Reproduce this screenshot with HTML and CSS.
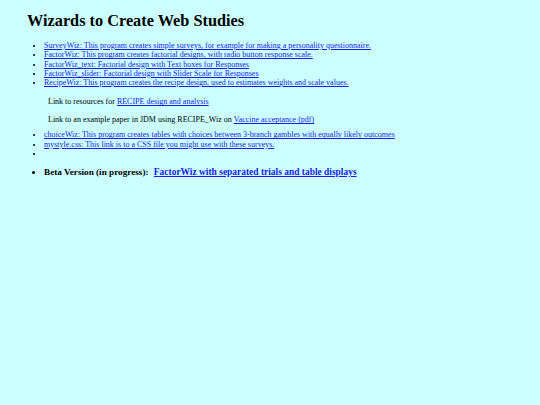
FILE: index.html
```html
<!DOCTYPE html>
<html>
<head>
<meta charset="utf-8">
<title>Wizards to Create Web Studies</title>
<link rel="stylesheet" href="styles.css">
</head>
<body>
<h1 class="title">Wizards to Create Web Studies</h1>
<ul class="list">
<li><a href="#">SurveyWiz: This program creates simple surveys, for example for making a personality questionnaire.</a></li>
<li><a href="#">FactorWiz: This program creates factorial designs, with radio button response scale.</a></li>
<li><a href="#">FactorWiz_text: Factorial design with Text boxes for Responses</a></li>
<li><a href="#">FactorWiz_slider: Factorial design with Slider Scale for Responses</a></li>
<li><a href="#">RecipeWiz: This program creates the recipe design, used to estimates weights and scale values.</a></li>
</ul>
<div class="note">
<p>Link to resources for <a href="#">RECIPE design and analysis</a></p>
<p>Link to an example paper in JDM using RECIPE_Wiz on <a href="#">Vaccine acceptance (pdf)</a></p>
</div>
<ul class="list second">
<li><a href="#">choiceWiz: This program creates tables with choices between 3-branch gambles with equally likely outcomes</a></li>
<li><a href="#">mystyle.css: This link is to a CSS file you might use with these surveys.</a></li>
<li></li>
</ul>
<ul class="list beta">
<li><b class="lead">Beta Version (in progress):</b> <a class="big" href="#">FactorWiz with separated trials and table displays</a></li>
</ul>
</body>
</html>
```
FILE: styles.css
```css
html { background: #ccffff; }
body {
  margin: 0;
  padding: 0 27px;
  font-family: "Times New Roman", "Liberation Serif", "Nimbus Roman", serif;
  font-size: 8px;
  color: #000;
}
a, a:visited { color: #1a1aee; }
.title {
  font-family: "Times New Roman", "Liberation Serif", serif;
  font-size: 16.3px;
  font-weight: 700;
  margin: 11px 0 0;
  line-height: 19px;
}
.list {
  margin: 11px 0 0;
  padding-left: 17px;
  line-height: 9.3px;
}
.note { padding-left: 21px; margin-top: 10px; }
.note p { margin: 8px 0 0; line-height: 10px; }
.second { margin-top: 5px; }
.beta { margin-top: 9px; font-size: 9.2px; line-height: 11px; }
.lead { font-family: "Times New Roman", "Liberation Serif", serif; font-weight: 700; font-size: 9.2px; }
.big { font-family: "Times New Roman", "Liberation Serif", serif; font-size: 9.45px; font-weight: 700; margin-left: 3px; }
```
